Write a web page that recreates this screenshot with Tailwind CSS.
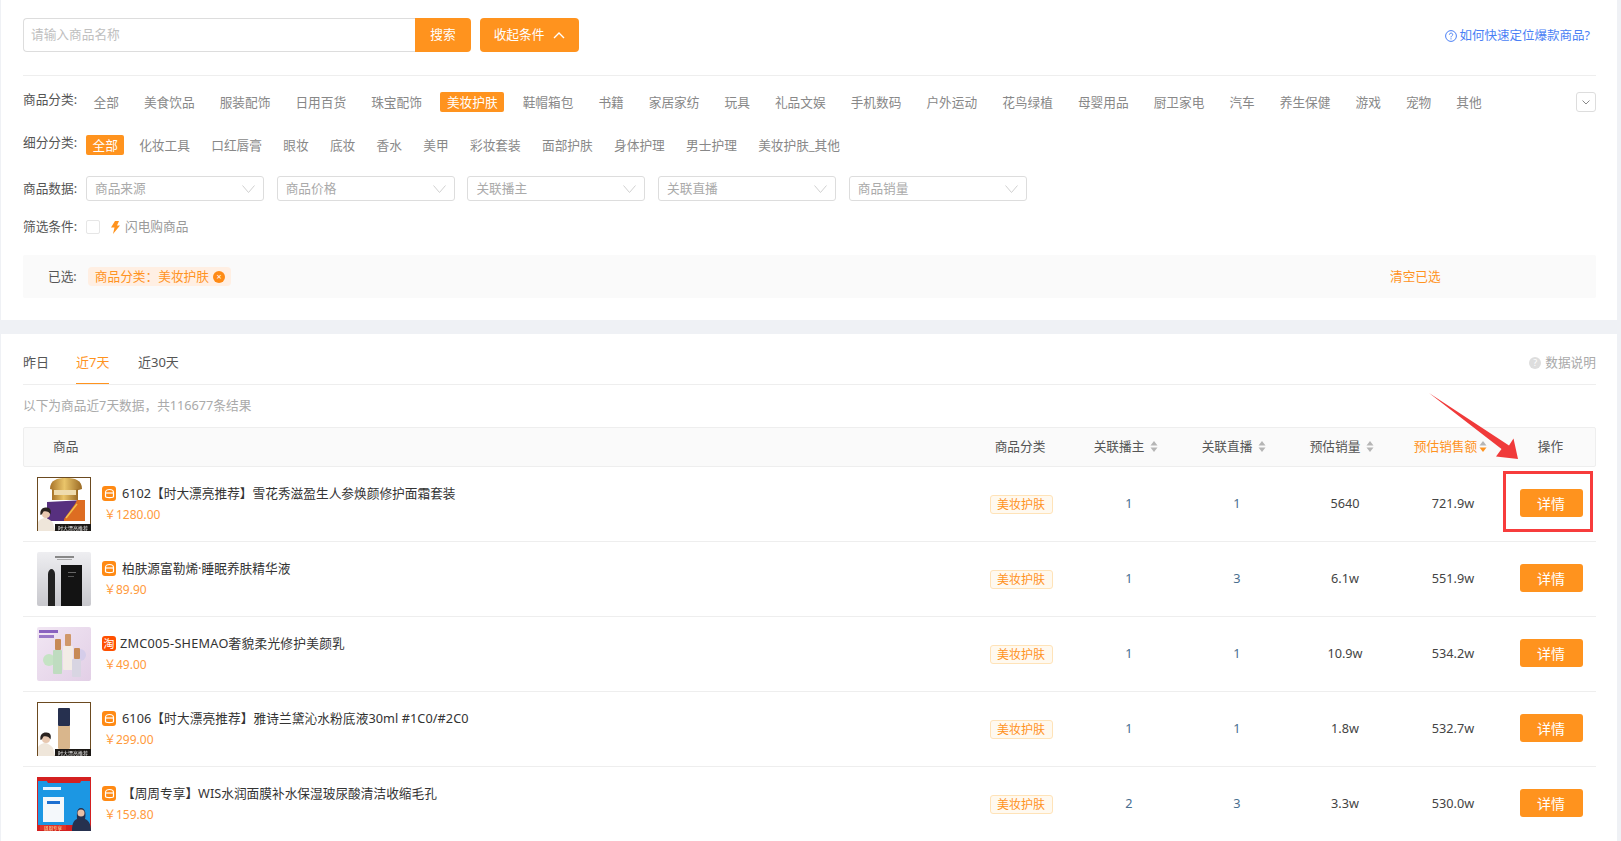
<!DOCTYPE html>
<html lang="zh-CN">
<head>
<meta charset="utf-8">
<title>商品库</title>
<script src="https://cdn.jsdelivr.net/npm/@tailwindcss/browser@4"></script>
</head>
<body class="bg-[#eff1f5] h-[841px] overflow-hidden relative font-['Noto_Sans','Noto_Sans_CJK_SC',sans-serif] text-[12.7px] text-[#666]">

<div class="ml-px w-[1616px]">
  <!-- 筛选区 -->
  <section class="bg-white h-[320px] pl-[22px] pr-[21px] pt-[18px]">
    <div class="flex items-center h-[34px]">
      <div class="w-[392px] h-full border border-[#ddd] border-r-0 rounded-l flex items-center pl-[7px] text-[#c0c0c0]">请输入商品名称</div>
      <button class="w-[56px] h-full bg-[#ff931e] text-white rounded-r">搜索</button>
      <button class="ml-[9px] w-[99px] h-full bg-[#ff931e] text-white rounded flex items-center justify-center gap-[9px]">收起条件
        <svg class="w-[12px] h-[7px]" viewBox="0 0 12 7" fill="none" stroke="#fff" stroke-width="1.4"><path d="M1 6l5-5 5 5"/></svg>
      </button>
      <a class="ml-auto mr-[6px] mt-[2px] flex items-center gap-[3px] text-[12.5px] text-[#4a7ff5]">
        <svg class="w-[12px] h-[12px]" viewBox="0 0 12 12" fill="none" stroke="#4a7ff5"><circle cx="6" cy="6" r="5.4"/><path d="M4.4 4.7c0-2.200 3.300-2.100 3.300-.1 0 1.200-1.700 1.300-1.700 2.800"/><path d="M6 8.300v1.100"/></svg>
        如何快速定位爆款商品?
      </a>
    </div>
    <div class="h-px bg-[#eee] mt-[23px]"></div>

    <div class="flex items-center mt-[16px] h-[20px]">
      <span class="w-[64px] shrink-0 mb-1 text-[#555]">商品分类:</span>
      <div id="catList" class="flex items-center gap-[12px]"></div>
      <button class="ml-auto w-[20px] h-[20px] border border-[#ddd] rounded-[3px] flex items-center justify-center">
        <svg class="w-[8px] h-[5px]" viewBox="0 0 8 5" fill="none" stroke="#888"><path d="M.5.5L4 4 7.500.5"/></svg>
      </button>
    </div>
    <div class="flex items-center mt-[23px] h-[20px]">
      <span class="w-[63px] shrink-0 mb-1 text-[#555]">细分分类:</span>
      <div id="subList" class="flex items-center gap-[8.300px]"></div>
    </div>
    <div class="flex items-center mt-[21px] h-[25px]">
      <span class="w-[63px] shrink-0 text-[#555]">商品数据:</span>
      <div id="selectList" class="flex items-center gap-[12.700px]"></div>
    </div>
    <div class="flex items-center mt-[19px] h-[14px]">
      <span class="w-[63px] shrink-0 text-[#555]">筛选条件:</span>
      <span class="w-[14px] h-[14px] border border-[#e6e6e6] rounded-[2px]"></span>
      <svg class="ml-[10px] w-[10px] h-[13px]" viewBox="0 0 10 13" fill="#ff931e"><path d="M5 0h4L7 4.500h3L3 13l1.500-6.500H1z"/></svg>
      <span class="ml-[5px] text-[#999]">闪电购商品</span>
    </div>
    <div class="relative flex items-center mt-[21px] h-[43px] bg-[#fafafa] rounded-[2px] pl-[25px]">
      <span class="text-[#555]">已选:</span>
      <span class="ml-[11px] h-[19px] w-[143px] bg-[#ffefe3] rounded-[4px] flex items-center pl-[7px] text-[#ff931e]">商品分类：美妆护肤
        <span class="absolute left-[190px] w-[12px] h-[12px] rounded-full bg-[#ff8a14] text-white text-[9px] leading-[11px] text-center">×</span>
      </span>
      <a class="absolute left-[1367px] text-[#ff931e]">清空已选</a>
    </div>
  </section>

  <!-- 商品列表 -->
  <section class="bg-white mt-[14px] h-[600px] pl-[22px] pr-[21px]">
    <div class="flex h-[51px] border-b border-[#eee] relative text-[13px]">
      <span class="w-[53px] pt-[19px] text-[#555]">昨日</span>
      <span class="w-[62px] pt-[19px] text-[#ff931e] relative">近7天
        <i class="absolute left-0 bottom-0 w-[33px] h-px bg-[#ff931e]"></i>
      </span>
      <span class="pt-[19px] text-[#555]">近30天</span>
      <span class="ml-auto pt-[19px] flex items-start gap-[4px] text-[12.7px] text-[#aaa]">
        <i class="mt-[4px] w-[12px] h-[12px] rounded-full bg-[#ddd] text-white text-[9px] leading-[12px] text-center not-italic">?</i>
        数据说明
      </span>
    </div>
    <p class="mt-[10px] h-[20px] leading-[20px] text-[#aaa]">以下为商品近7天数据，共116677条结果</p>
    <div class="mt-[12px] h-[40px] bg-[#fafafa] border border-[#eee] rounded-[2px] grid grid-cols-[942px_108px_108px_108px_108px_108px_90px] items-center text-[#555]">
      <span class="pl-[29px]">商品</span>
      <span class="text-center">商品分类</span>
      <span class="flex items-center justify-center gap-[6px] pr-[4px]">关联播主
        <svg class="w-[8px] h-[11px]" viewBox="0 0 8 11" fill="#b5b5b5"><path d="M4 0l3.500 4.500h-7zM4 11l3.500-4.500h-7z"/></svg></span>
      <span class="flex items-center justify-center gap-[6px] pr-[4px]">关联直播
        <svg class="w-[8px] h-[11px]" viewBox="0 0 8 11" fill="#b5b5b5"><path d="M4 0l3.500 4.500h-7zM4 11l3.500-4.500h-7z"/></svg></span>
      <span class="flex items-center justify-center gap-[6px] pr-[4px]">预估销量
        <svg class="w-[8px] h-[11px]" viewBox="0 0 8 11" fill="#b5b5b5"><path d="M4 0l3.500 4.500h-7zM4 11l3.500-4.500h-7z"/></svg></span>
      <span class="flex items-center justify-center gap-[2px] pr-[3px] text-[#ff931e]">预估销售额
        <svg class="w-[8px] h-[11px]" viewBox="0 0 8 11"><path fill="#b5b5b5" d="M4 0l3.500 4.500h-7z"/><path fill="#ff931e" d="M4 11l3.500-4.500h-7z"/></svg></span>
      <span class="text-center pr-[1px]">操作</span>
    </div>
    <div id="rows"></div>
  </section>
</div>

<!-- 红色标注 -->
<div class="absolute left-[1503px] top-[471px] w-[90px] h-[61px] border-[3px] border-[#f73c3c]"></div>
<svg class="absolute left-[1425px] top-[390px] w-[100px] h-[75px]" viewBox="0 0 100 75" fill="#f03a3a"><path d="M4 3l80 52.500 4.500-7L93 69 71 66.500l5.500-7.500z"/></svg>

<script>
// 分类数据
const cats = ['全部','美食饮品','服装配饰','日用百货','珠宝配饰','美妆护肤','鞋帽箱包','书籍','家居家纺','玩具','礼品文娱','手机数码','户外运动','花鸟绿植','母婴用品','厨卫家电','汽车','养生保健','游戏','宠物','其他'];
const subs = ['全部','化妆工具','口红唇膏','眼妆','底妆','香水','美甲','彩妆套装','面部护肤','身体护理','男士护理','美妆护肤_其他'];
const selects = ['商品来源','商品价格','关联播主','关联直播','商品销量'];

function chip(name, active) {
    return `<span class="h-[20px] px-[6.500px] leading-[20px] rounded-[2px] whitespace-nowrap ${active ? 'bg-[#ff931e] text-white' : 'text-[#888]'}">${name}</span>`;
}
document.getElementById('catList').innerHTML = cats.map(c => chip(c, c === '美妆护肤')).join('');
document.getElementById('subList').innerHTML = subs.map((c, i) => chip(c, i === 0)).join('');
document.getElementById('selectList').innerHTML = selects.map(s => `
    <div class="w-[178px] h-[25px] border border-[#ddd] rounded-[3px] flex items-center justify-between pl-[8px] pr-[8px] text-[#aaa]">${s}
        <svg class="w-[13px] h-[8px]" viewBox="0 0 13 8" fill="none" stroke="#d0d0d0"><path d="M.5.5l6 7 6-7"/></svg>
    </div>`).join('');

// 缩略图
const person = `<path d="M1 54V45c2-3 5-4 7-4s6 2 8 5l2 8z" fill="#efe6da"/><circle cx="9" cy="37" r="4" fill="#e8c8b0"/><path d="M3.500 38c-1-6 3-8 6-7.500 4 0 5 3 4 7-1-3-5-4-7-3-1 1-1 3-3 3.500z" fill="#2a2320"/>`;
const badge = `<rect x="18" y="47" width="36" height="7" fill="#1c1916"/><text x="36" y="52.500" font-size="5" fill="#eee" text-anchor="middle">时大漂亮推荐</text>`;
const frame = `<rect x=".5" y=".5" width="53" height="53" fill="#fff" stroke="#6b4a20"/>`;
const thumbs = [
    `<defs><linearGradient id="gold" x1="0" x2="1" y1="0" y2="0"><stop offset="0" stop-color="#a8742a"/><stop offset=".45" stop-color="#eac56a"/><stop offset="1" stop-color="#9a6a24"/></linearGradient></defs>${frame}<path d="M13 12C13 3 20 1 29 1s16 2 16 11c-8 3-24 3-32 0z" fill="url(#gold)"/><path d="M15 12c8 2 18 2 26 0v11H15z" fill="url(#gold)"/><rect x="17" y="13" width="22" height="5" fill="#efdcae"/><path d="M10 25l38-2v21H10z" fill="#57307f"/><path d="M27 42l11-15 2-4h8v21H27z" fill="#dd6d22"/><path d="M29 41l11-14" stroke="#f2c14e" stroke-width="1.500"/>${person}${badge}`,
    `<defs><linearGradient id="silver" x1="0" x2="0" y1="0" y2="1"><stop offset="0" stop-color="#eeeef1"/><stop offset="1" stop-color="#c8c8cd"/></linearGradient></defs><rect width="54" height="54" rx="2" fill="url(#silver)"/><rect x="18" y="4" width="19" height="2" fill="#888"/><rect x="20" y="7" width="15" height="1" fill="#aaa"/><path d="M11 22c0-3 2-5 3.500-5s3.500 2 3.500 5v32h-7z" fill="#222"/><rect x="24" y="13" width="21" height="41" fill="#131313"/><rect x="31" y="20" width="8" height="1" fill="#666"/><rect x="31" y="24" width="6" height="1" fill="#555"/>`,
    `<defs><linearGradient id="lilac" x1="0" x2="1" y1="0" y2="1"><stop offset="0" stop-color="#f1e6f3"/><stop offset="1" stop-color="#e2cfe6"/></linearGradient></defs><rect width="54" height="54" rx="2" fill="url(#lilac)"/><rect x="2" y="3" width="19" height="3" fill="#8a62c0"/><rect x="2" y="8" width="15" height="3" fill="#9a78c8"/><circle cx="12" cy="33" r="6" fill="#c5e3c4"/><circle cx="43" cy="28" r="6" fill="#d5cdea"/><rect x="18" y="12" width="6" height="11" rx="1" fill="#c78a55"/><rect x="16" y="23" width="9" height="24" rx="1" fill="#bfdcc0"/><rect x="28" y="7" width="6" height="12" rx="1" fill="#d0986a"/><rect x="26" y="19" width="10" height="24" rx="1" fill="#f3ece6"/><rect x="37" y="21" width="6" height="11" rx="1" fill="#c78a55"/><rect x="35" y="32" width="9" height="18" rx="1" fill="#d8d5e2"/>`,
    `${frame}<rect x="21" y="6" width="12" height="18" rx="1" fill="#26304f"/><path d="M21 24h12v22c0 2-12 2-12 0z" fill="#d9b68c"/>${person}${badge}`,
    `<rect width="54" height="54" fill="#d42020"/><rect x="1" y="4" width="52" height="44" fill="#1c97e3"/><path d="M8 1h38l-3 5H11z" fill="#d42020"/><rect x="6" y="10" width="18" height="3" fill="#e9f5ff"/><rect x="6" y="20" width="21" height="25" fill="#f4f8fb"/><rect x="10" y="24" width="13" height="3" fill="#1c6fd0"/><path d="M35 54c0-8 2-11 5-12 0-4-1-11 4-11s5 7 4 11c3 1 6 4 6 12z" fill="#26314f"/><circle cx="44" cy="36" r="3.500" fill="#e8bfa6"/><rect x="3" y="48" width="26" height="5" fill="#e23428"/><text x="16" y="52.500" font-size="4.500" fill="#ffe9a0" text-anchor="middle">周周专享</text>`
];

// 商品数据
const products = [
    { title: '6102【时大漂亮推荐】雪花秀滋盈生人参焕颜修护面霜套装', price: '1280.00', anchor: 1, live: 1, sales: '5640', amount: '721.9w', titleClass: '' },
    { title: '柏肤源富勒烯·睡眠养肤精华液', price: '89.90', anchor: 1, live: 3, sales: '6.1w', amount: '551.9w', titleClass: '' },
    { title: 'ZMC005-SHEMAO奢貌柔光修护美颜乳', price: '49.00', anchor: 1, live: 1, sales: '10.9w', amount: '534.2w', taobao: true, titleClass: 'tracking-[0.25px]' },
    { title: '6106【时大漂亮推荐】雅诗兰黛沁水粉底液30ml #1C0/#2C0', price: '299.00', anchor: 1, live: 1, sales: '1.8w', amount: '532.7w', titleClass: 'tracking-[0.08px]' },
    { title: '【周周专享】WIS水润面膜补水保湿玻尿酸清洁收缩毛孔', price: '159.80', anchor: 2, live: 3, sales: '3.3w', amount: '530.0w', titleClass: '' }
];

const shopIcon = `<span class="w-[14px] h-[15px] rounded-[3px] bg-[#ff8a14] flex items-center justify-center shrink-0">
    <svg class="w-[11px] h-[11px]" viewBox="0 0 11 11" fill="none" stroke="#fff" stroke-width="1.200"><path d="M1.500 4.500C1.500.5 9.500.5 9.500 4.500v4c0 1.500-8 1.500-8 0z"/><path d="M1.500 5h8"/></svg></span>`;
const taobaoIcon = `<span class="w-[14px] h-[15px] rounded-[3px] bg-[#ff5000] text-white text-[11px] leading-[15px] text-center shrink-0">淘</span>`;

document.getElementById('rows').innerHTML = products.map((p, i) => `
    <div class="h-[75px] border-b border-[#eee] grid grid-cols-[944px_108px_108px_108px_108px_108px_90px] items-center">
        <div class="flex items-center pl-[14px]">
            <svg class="w-[54px] h-[54px] shrink-0 blur-[0.3px]" viewBox="0 0 54 54">${thumbs[i]}</svg>
            <div class="ml-[11px] text-[#333]">
                <div class="flex items-center h-[15px]">
                    ${p.taobao ? taobaoIcon : shopIcon}
                    <span class="${p.taobao ? 'ml-[4px]' : 'ml-[6px]'} whitespace-nowrap ${p.titleClass}">${p.title}</span>
                </div>
                <div class="mt-[6px] ml-[2px] text-[12px] leading-[15px] text-[#ff9a3c]">￥${p.price}</div>
            </div>
        </div>
        <div class="flex justify-center"><span class="w-[63px] h-[19px] border border-[#ffe3b8] bg-[#fff9ef] rounded-[3px] text-center text-[12px] leading-[17px] text-[#ff931e]">美妆护肤</span></div>
        <div class="text-center text-[#4a6f8f]">${p.anchor}</div>
        <div class="text-center text-[#4a6f8f]">${p.live}</div>
        <div class="text-center text-[#444]">${p.sales}</div>
        <div class="text-center text-[#444]">${p.amount}</div>
        <div class="flex justify-center pr-[2px] mb-[2px]"><button class="w-[63px] h-[28px] bg-[#ff931e] text-white rounded-[3px] text-[14px]">详情</button></div>
    </div>`).join('');
</script>
</body>
</html>
